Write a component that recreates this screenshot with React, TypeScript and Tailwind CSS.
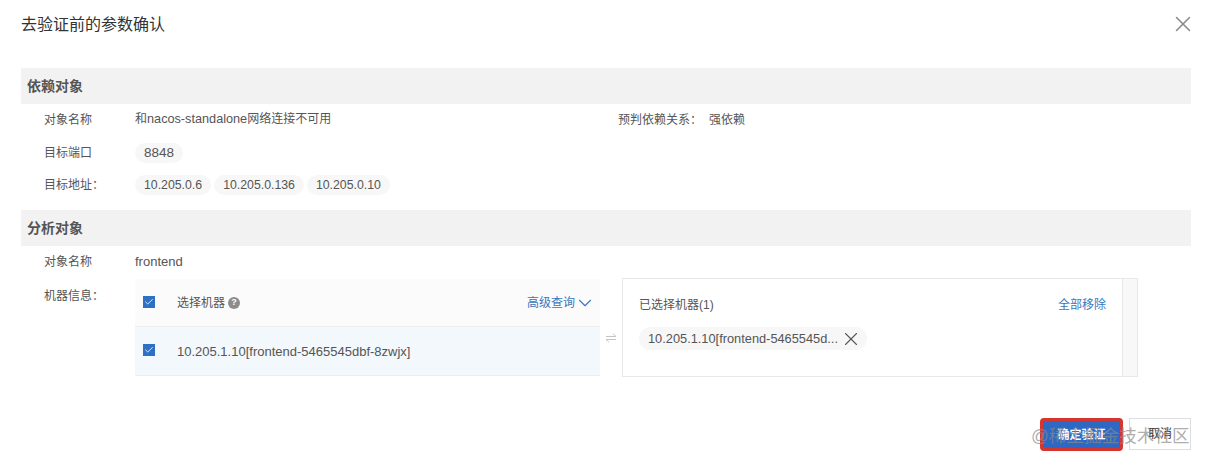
import { X, ChevronDown, Check } from "lucide-react";

const font = { fontFamily: '"Liberation Sans", "Noto Sans CJK SC", sans-serif' };

function Tag({ children }: { children: React.ReactNode }) {
  return (
    <span className="flex h-[20px] items-center rounded-full bg-[#f7f7f7] px-[9px] text-[12.3px] leading-none text-[#555]">
      {children}
    </span>
  );
}

function Box() {
  return (
    <span className="-mt-[2px] flex h-3 w-3 items-center justify-center bg-[#2f6fc4]">
      <Check className="h-2.5 w-2.5 text-white" strokeWidth={2} />
    </span>
  );
}

function SectionBar({ title }: { title: string }) {
  return (
    <div className="flex h-9 items-center bg-[#f2f2f2] pl-[6px] text-[14px] font-bold text-[#555]">{title}</div>
  );
}

export default function App() {
  return (
    <div className="relative h-[462px] w-[1207px] overflow-hidden bg-white text-[12px] text-[#555]" style={font}>
      {/* Header */}
      <div className="flex h-[68px] items-start justify-between pl-[21px] pr-[11px] pt-[15px]">
        <h1 className="text-[16px] leading-[20px] text-[#333]">去验证前的参数确认</h1>
        <X className="-mt-[4px] h-[26px] w-[26px] text-[#8a8a8a]" strokeWidth={1.4} />
      </div>

      <div className="mx-[21px] w-[1170px]">
        {/* 依赖对象 */}
        <SectionBar title="依赖对象" />
        <div className="mt-[6px] flex h-[20px] items-center">
          <span className="w-[114px] pl-[23px]">对象名称</span>
          <span className="w-[483px]">
            和<span className="text-[12.7px]">nacos-standalone</span>网络连接不可用
          </span>
          <span className="w-[84px]">预判依赖关系：</span>
          <span className="ml-[-6px] pl-[13px]">强依赖</span>
        </div>
        <div className="mt-[12px] flex h-[22px] items-center">
          <span className="w-[114px] pl-[23px]">目标端口</span>
          <Tag>
            <span className="text-[13.5px]">8848</span>
          </Tag>
        </div>
        <div className="mt-[10px] flex h-[22px] items-center">
          <span className="w-[114px] pl-[23px]">目标地址：</span>
          <div className="flex gap-[3px]">
            <Tag>10.205.0.6</Tag>
            <Tag>10.205.0.136</Tag>
            <Tag>10.205.0.10</Tag>
          </div>
        </div>

        {/* 分析对象 */}
        <div className="mt-[14px]">
          <SectionBar title="分析对象" />
        </div>
        <div className="mt-[6px] flex h-[20px] items-center">
          <span className="w-[114px] pl-[23px]">对象名称</span>
          <span className="text-[13px]">frontend</span>
        </div>
        <div className="mt-[6px] flex">
          <span className="w-[114px] pl-[23px] pt-[10px] leading-[16px]">机器信息：</span>
          {/* Left list */}
          <div className="mt-px w-[465px]">
            <div className="flex h-[48px] items-center border-b border-[#eee] bg-[#fbfbfb] pl-2 pr-[4px]">
              <Box />
              <span className="ml-[22px]">选择机器</span>
              <span className="ml-[3px] flex h-3 w-3 items-center justify-center rounded-full bg-[#8c8c8c] text-[9px] font-bold leading-none text-white">
                ?
              </span>
              <span className="ml-auto text-[#3a76bd]">高级查询</span>
              <ChevronDown className="-ml-px -my-1 h-[22px] w-[22px] text-[#3a76bd]" strokeWidth={1.2} />
            </div>
            <div className="flex h-[49px] items-center border-b border-[#e8eef3] bg-[#f3f8fc] pl-2">
              <Box />
              <span className="ml-[22px] mt-px text-[13px]">10.205.1.10[frontend-5465545dbf-8zwjx]</span>
            </div>
          </div>
          {/* Swap icon */}
          <div className="flex w-[22px] items-center justify-center pt-[20px]">
            <svg width="12" height="10" viewBox="0 0 12 10" fill="none" stroke="#c4c4c4" strokeWidth="1">
              <path d="M1 3.5h10M8 .8l3 2.7M11 6.5H1M4 9.2L1 6.5" />
            </svg>
          </div>
          {/* Right panel */}
          <div className="flex h-[99px] w-[516px] border border-[#e8e8e8]">
            <div className="flex-1 px-4 pt-[17px]">
              <div className="flex items-center justify-between leading-[18px]">
                <span>已选择机器(1)</span>
                <span className="text-[#3a76bd]">全部移除</span>
              </div>
              <div className="mt-[13px] flex h-[23px] w-[228px] items-center justify-between rounded-full bg-[#f7f7f7] pl-[9px] pr-[5px]">
                <span className="text-[12.8px]">10.205.1.10[frontend-5465545d...</span>
                <X className="h-[22px] w-[22px] shrink-0 text-[#555]" strokeWidth={1.2} />
              </div>
            </div>
            <div className="w-[15px] border-l border-[#e8e8e8] bg-[#f8f8f8]" />
          </div>
        </div>

        {/* Footer */}
        <div className="mt-[41px] flex justify-end">
          <button className="h-[33px] w-[83px] rounded-[4px] border-[3px] border-[#d4362f] bg-[#2c68c4] text-[12px] font-bold text-white">
            确定验证
          </button>
          <button className="ml-[6px] h-[32px] w-[62px] border border-[#ddd] bg-white text-[12px] text-[#333]">
            取消
          </button>
        </div>
      </div>

      {/* Watermark */}
      <span className="absolute left-[1031px] top-[426px] text-[17.6px] leading-[20px] text-[#8a8a8a]/70">
        @稀土掘金技术社区
      </span>
    </div>
  );
}
